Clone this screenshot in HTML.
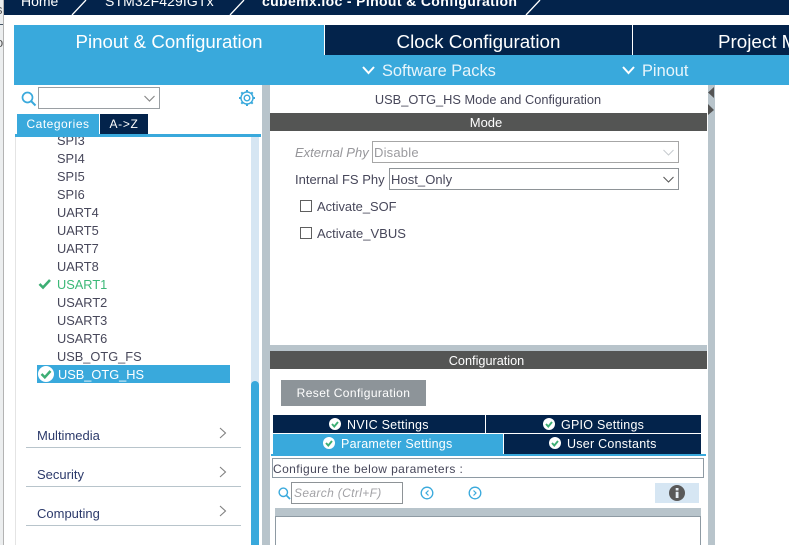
<!DOCTYPE html>
<html>
<head>
<meta charset="utf-8">
<style>
html,body{margin:0;padding:0;background:#fff;width:789px;height:545px;overflow:hidden}
body{position:relative;font-family:"Liberation Sans",sans-serif;color:#3d3d4d}
.a{position:absolute;white-space:nowrap}
.c{text-align:center}
svg{position:absolute}
.li{position:absolute;left:41px;font-size:12.800px;line-height:18px;height:18px;color:#47475a}
.cat{position:absolute;left:37px;font-size:13px;line-height:18px;color:#2c3a6b}
.rule{position:absolute;left:26px;width:215px;height:1px;background:#b8c4cb}
.tab{color:#fff;font-size:12.500px;line-height:18px;letter-spacing:.25px}
</style>
</head>
<body>
<!-- far left desktop edge -->
<div class="a" style="left:0;top:0;width:3px;height:545px;background:#eceeef;overflow:hidden;font-size:13px;color:#555">
<span class="a" style="left:-4px;top:2px">s</span>
<span class="a" style="left:-4px;top:17px;color:#456">H</span>
<span class="a" style="left:-4px;top:35px">o</span>
</div>
<div class="a" style="left:3px;top:0;width:1px;height:545px;background:#b3b3b3"></div>

<!-- breadcrumb bar -->
<div class="a" style="left:4px;top:0;width:785px;height:15px;background:#03234b;overflow:hidden;color:#fff;font-size:14px;line-height:18px">
<span class="a" style="left:17px;top:-8px">Home</span>
<span class="a" style="left:101px;top:-8px;letter-spacing:.1px">STM32F429IGTx</span>
<span class="a" style="left:258px;top:-8px;font-weight:bold;letter-spacing:.36px">cubemx.ioc - Pinout &amp; Configuration</span>
</div>
<svg style="left:0;top:0" width="789" height="15">
<path d="M72 15L86 0M230 15L244 0M526 15L540 0" stroke="#fff" stroke-width="1.300" fill="none"/>
</svg>

<!-- main tabs -->
<div class="a" style="left:14px;top:25px;width:310px;height:30px;background:#39a9dc"></div>
<div class="a" style="left:325px;top:25px;width:464px;height:30px;background:#03234b"></div>
<div class="a" style="left:632px;top:25px;width:1px;height:30px;background:#fff"></div>
<div class="a c" style="left:14px;top:31px;width:310px;font-size:18.700px;line-height:22px;color:#fff">Pinout &amp; Configuration</div>
<div class="a c" style="left:325px;top:31px;width:307px;font-size:18.800px;line-height:22px;color:#fff">Clock Configuration</div>
<div class="a" style="left:718px;top:31px;width:71px;overflow:hidden;font-size:18.800px;line-height:22px;color:#fff">Project Manager</div>

<!-- blue sub bar -->
<div class="a" style="left:14px;top:55px;width:775px;height:30px;background:#39a9dc"></div>
<svg style="left:0;top:0" width="789" height="85">
<path d="M363 67L368.500 73L374 67M623 67L628.500 73L634 67" stroke="#fff" stroke-width="2" fill="none"/>
</svg>
<div class="a" style="left:382px;top:61px;font-size:16.400px;line-height:20px;color:#e8f5fb">Software Packs</div>
<div class="a" style="left:642px;top:61px;font-size:16.400px;line-height:20px;color:#e8f5fb">Pinout</div>

<!-- splitters -->
<div class="a" style="left:262px;top:85px;width:8px;height:460px;background:#b8c4cb"></div>
<div class="a" style="left:708px;top:85px;width:7px;height:460px;background:#b8c4cb"></div>
<svg style="left:0;top:0" width="789" height="130">
<path d="M714 87V98L708 92.500Z M708 104L714 110L708 115Z" fill="#545454"/>
</svg>

<!-- left panel header -->
<svg style="left:21px;top:91px" width="16" height="16">
<circle cx="6.500" cy="6.500" r="5" stroke="#39a9dc" stroke-width="1.700" fill="none"/>
<path d="M10 10L14.500 14.500" stroke="#39a9dc" stroke-width="2" fill="none"/>
</svg>
<div class="a" style="left:38px;top:87px;width:120px;height:20px;border:1px solid #9a9fa3;background:#fff"></div>
<svg style="left:144px;top:95px" width="12" height="8">
<path d="M0.500 1L5.500 6L10.500 1" stroke="#8a8a8a" stroke-width="1.200" fill="none"/>
</svg>
<svg style="left:239px;top:90px" width="16" height="16" viewBox="0 0 16 16">
<circle cx="8" cy="8" r="6" stroke="#39a9dc" stroke-width="1.400" fill="none"/>
<circle cx="8" cy="8" r="2.800" stroke="#39a9dc" stroke-width="1.400" fill="none"/>
<path d="M8 0V2.500M8 13.500V16M0 8H2.500M13.500 8H16M2.300 2.300L4 4M12 12L13.700 13.700M2.300 13.700L4 12M12 4L13.700 2.300" stroke="#39a9dc" stroke-width="2" fill="none"/>
</svg>
<div class="a c" style="left:17px;top:114px;width:82px;height:20px;background:#39a9dc;color:#fff;font-size:12px;line-height:20px;letter-spacing:.5px">Categories</div>
<div class="a c" style="left:100px;top:114px;width:48px;height:20px;background:#03234b;color:#fff;font-size:12px;line-height:20px;letter-spacing:.65px">A-&gt;Z</div>
<div class="a" style="left:15px;top:134px;width:246px;height:3px;background:#39a9dc"></div>
<div class="a" style="left:15px;top:137px;width:1px;height:408px;background:#e4e4e4"></div>

<!-- scrollbar -->
<div class="a" style="left:251px;top:137px;width:8px;height:408px;background:#d6e6f3"></div>
<div class="a" style="left:251px;top:381px;width:8px;height:164px;background:#39a9dc;border-radius:4px 4px 0 0"></div>

<!-- tree list -->
<div class="a" style="left:16px;top:137px;width:235px;height:240px;overflow:hidden">
<div class="li" style="top:-5px">SPI3</div>
<div class="li" style="top:13px">SPI4</div>
<div class="li" style="top:31px">SPI5</div>
<div class="li" style="top:49px">SPI6</div>
<div class="li" style="top:67px">UART4</div>
<div class="li" style="top:85px">UART5</div>
<div class="li" style="top:103px">UART7</div>
<div class="li" style="top:121px">UART8</div>
<div class="li" style="top:139px;color:#3cb878">USART1</div>
<div class="li" style="top:157px">USART2</div>
<div class="li" style="top:175px">USART3</div>
<div class="li" style="top:193px">USART6</div>
<div class="li" style="top:211px">USB_OTG_FS</div>
</div>
<svg style="left:38px;top:278px" width="14" height="12">
<path d="M1.500 6L5 9.500L12 2" stroke="#3dae74" stroke-width="2.600" fill="none"/>
</svg>
<div class="a" style="left:37px;top:365px;width:193px;height:18px;background:#39a9dc"></div>
<div class="a" style="left:58px;top:366px;font-size:12.800px;line-height:18px;color:#fff">USB_OTG_HS</div>
<svg style="left:38px;top:366px" width="16" height="16">
<circle cx="8" cy="8" r="8" fill="#fff"/>
<path d="M3.500 8L6.800 11.300L12.500 5" stroke="#3dae74" stroke-width="2.500" fill="none"/>
</svg>

<!-- categories -->
<div class="cat" style="top:427px">Multimedia</div>
<div class="rule" style="top:447px"></div>
<div class="cat" style="top:466px">Security</div>
<div class="rule" style="top:486px"></div>
<div class="cat" style="top:505px">Computing</div>
<div class="rule" style="top:525px"></div>
<svg style="left:0;top:0" width="262" height="545">
<path d="M220 428L225.500 433L220 438M220 467L225.500 472L220 477M220 506L225.500 511L220 516" stroke="#808080" stroke-width="1.100" fill="none"/>
</svg>

<!-- center panel: mode -->
<div class="a c" style="left:270px;top:91px;width:436px;font-size:12.800px;line-height:17px;color:#47475a">USB_OTG_HS Mode and Configuration</div>
<div class="a" style="left:270px;top:113px;width:437px;height:18px;background:#545554"></div>
<div class="a c" style="left:270px;top:114px;width:432px;color:#fff;font-size:13px;line-height:18px">Mode</div>

<div class="a" style="left:295px;top:144px;font-size:13px;line-height:17px;font-style:italic;color:#96969a">External Phy</div>
<div class="a" style="left:372px;top:141px;width:305px;height:20px;border:1px solid #a6a6a6;background:#fff"></div>
<div class="a" style="left:374px;top:144px;font-size:13px;line-height:17px;color:#9b9b9f;letter-spacing:.2px">Disable</div>
<svg style="left:663px;top:149px" width="12" height="8">
<path d="M0.500 1L5.500 6L10.500 1" stroke="#c8ccd0" stroke-width="1.100" fill="none"/>
</svg>

<div class="a" style="left:295px;top:171px;font-size:13px;line-height:17px;color:#47475a">Internal FS Phy</div>
<div class="a" style="left:389px;top:168px;width:288px;height:20px;border:1px solid #8e9397;background:#fff"></div>
<div class="a" style="left:391px;top:171px;font-size:13px;line-height:17px;color:#47475a;letter-spacing:.05px">Host_Only</div>
<svg style="left:663px;top:176px" width="12" height="8">
<path d="M0.500 1L5.500 6L10.500 1" stroke="#5a5a5a" stroke-width="1.100" fill="none"/>
</svg>

<div class="a" style="left:300px;top:200px;width:10px;height:10px;border:1px solid #5f5f5f"></div>
<div class="a" style="left:317px;top:198px;font-size:12.900px;line-height:17px;color:#47475a">Activate_SOF</div>
<div class="a" style="left:300px;top:227px;width:10px;height:10px;border:1px solid #5f5f5f"></div>
<div class="a" style="left:317px;top:225px;font-size:13px;line-height:17px;color:#47475a">Activate_VBUS</div>

<!-- divider -->
<div class="a" style="left:270px;top:345px;width:437px;height:6px;background:#b8c4cb"></div>

<!-- configuration -->
<div class="a" style="left:270px;top:351px;width:437px;height:18px;background:#545554"></div>
<div class="a c" style="left:270px;top:352px;width:433px;color:#fff;font-size:12.700px;line-height:18px">Configuration</div>
<div class="a c" style="left:281px;top:380px;width:145px;height:26px;background:#8d9499;color:#fff;font-size:12px;line-height:26px;letter-spacing:.4px">Reset Configuration</div>

<!-- config tabs -->
<div class="a" style="left:273px;top:415px;width:212px;height:18px;background:#03234b"></div>
<div class="a" style="left:486px;top:415px;width:215px;height:18px;background:#03234b"></div>
<div class="a" style="left:273px;top:434px;width:230px;height:20px;background:#39a9dc"></div>
<div class="a" style="left:504px;top:434px;width:197px;height:20px;background:#03234b"></div>
<div class="a" style="left:271px;top:454px;width:435px;height:2px;background:#39a9dc"></div>
<div class="tab a" style="left:347px;top:416px">NVIC Settings</div>
<div class="tab a" style="left:561px;top:416px">GPIO Settings</div>
<div class="tab a" style="left:341px;top:435px">Parameter Settings</div>
<div class="tab a" style="left:567px;top:435px">User Constants</div>
<svg style="left:0;top:0" width="789" height="545">
<circle cx="335" cy="424" r="6" fill="#fff"/><path d="M332 424L334.300 426.500L338 422" stroke="#3dae74" stroke-width="1.900" fill="none"/>
<circle cx="549" cy="424" r="6" fill="#fff"/><path d="M546 424L548.300 426.500L552 422" stroke="#3dae74" stroke-width="1.900" fill="none"/>
<circle cx="329" cy="443" r="6" fill="#fff"/><path d="M326 443L328.300 445.500L332 441" stroke="#3dae74" stroke-width="1.900" fill="none"/>
<circle cx="555" cy="443" r="6" fill="#fff"/><path d="M552 443L554.300 445.500L558 441" stroke="#3dae74" stroke-width="1.900" fill="none"/>
</svg>

<!-- configure parameters -->
<div class="a" style="left:272px;top:458px;width:430px;height:18px;border:1px solid #8e9aa3;background:#fff"></div>
<div class="a" style="left:273px;top:460px;font-size:12px;line-height:18px;color:#47475a;letter-spacing:.4px">Configure the below parameters :</div>

<!-- search row -->
<svg style="left:278px;top:487px" width="13" height="13">
<circle cx="5.300" cy="5.300" r="4.200" stroke="#39a9dc" stroke-width="1.400" fill="none"/>
<path d="M8.300 8.300L12 12" stroke="#39a9dc" stroke-width="1.700" fill="none"/>
</svg>
<div class="a" style="left:291px;top:482px;width:110px;height:20px;border:1px solid #8e9397;background:#fff"></div>
<div class="a" style="left:294px;top:485px;font-size:12px;line-height:16px;font-style:italic;color:#a2a2a6;letter-spacing:.35px">Search (Ctrl+F)</div>
<svg style="left:0;top:0" width="789" height="545">
<circle cx="427" cy="493" r="5.800" stroke="#39a9dc" stroke-width="1.300" fill="none"/>
<path d="M428.500 490.500L426 493L428.500 495.500" stroke="#39a9dc" stroke-width="1.200" fill="none"/>
<circle cx="475" cy="493" r="5.800" stroke="#39a9dc" stroke-width="1.300" fill="none"/>
<path d="M473.500 490.500L476 493L473.500 495.500" stroke="#39a9dc" stroke-width="1.200" fill="none"/>
</svg>
<div class="a" style="left:655px;top:483px;width:44px;height:20px;background:#d6e6f3"></div>
<svg style="left:669px;top:485px" width="16" height="16">
<circle cx="8" cy="8" r="8" fill="#595959"/>
<rect x="6.700" y="6.800" width="2.800" height="6.200" fill="#e6eef5"/>
<rect x="6.700" y="3" width="2.800" height="2.500" fill="#e6eef5"/>
</svg>

<!-- table -->
<div class="a" style="left:275px;top:508px;width:426px;height:8px;background:#b8c4cb"></div>
<div class="a" style="left:275px;top:516px;width:424px;height:29px;border:1px solid #8e9aa3;border-bottom:0;background:#fff"></div>
</body>
</html>
